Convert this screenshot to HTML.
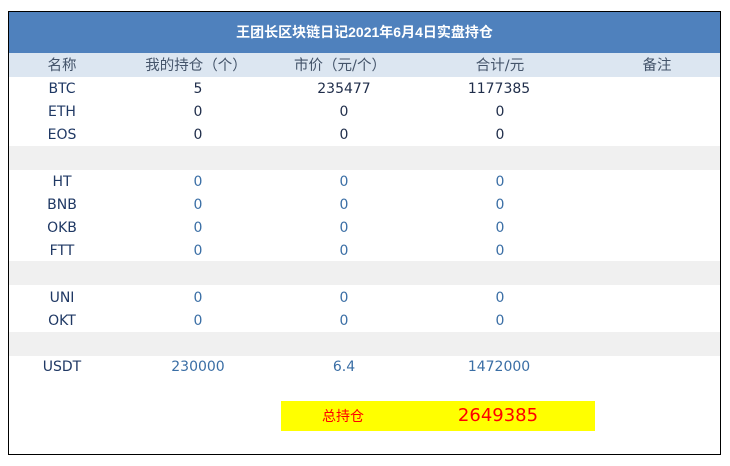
<!DOCTYPE html>
<html><head><meta charset="utf-8"><style>
body{margin:0;width:730px;height:466px;background:#fff;position:relative;overflow:hidden;font-family:"DejaVu Sans","Noto Sans CJK SC",sans-serif;}
.box{position:absolute;left:8px;top:11px;width:711px;height:442px;border:1px solid #000;}
.title{position:absolute;left:9px;top:12px;width:711px;height:41px;background:#4f81bd;color:#fff;font-weight:bold;font-size:14px;text-align:center;line-height:41px;font-family:"Liberation Sans","Noto Sans CJK SC",sans-serif;}
.hdr{position:absolute;left:9px;top:53px;width:711px;height:24px;background:#dce6f1;}
.gray{position:absolute;left:9px;width:711px;height:24px;background:#f0f0f0;}
.t{position:absolute;font-size:14px;transform:translate(-50%,1px);white-space:nowrap;line-height:16px;}
.h{color:#44546a;font-size:14.5px;}
.d{color:#1f2d4a;}
.b{color:#3a6ea5;}
.n{color:#1f3864;}
.y{position:absolute;left:281px;top:401px;width:314px;height:30px;background:#ffff00;}
</style></head><body>
<div class="box"></div>
<div class="title">王团长区块链日记2021年6月4日实盘持仓</div>
<div class="hdr"></div>
<div class="gray" style="top:146px"></div>
<div class="gray" style="top:261px"></div>
<div class="gray" style="top:332px"></div>
<div class="t h" style="left:62px;top:57px">名称</div>
<div class="t h" style="left:196px;top:57px">我的持仓（个）</div>
<div class="t h" style="left:340px;top:57px">市价（元/个）</div>
<div class="t h" style="left:500px;top:57px">合计/元</div>
<div class="t h" style="left:657px;top:57px">备注</div>

<div class="t n" style="left:62px;top:80px">BTC</div><div class="t d" style="left:198px;top:80px">5</div><div class="t d" style="left:344px;top:80px">235477</div><div class="t d" style="left:499px;top:80px">1177385</div>
<div class="t n" style="left:62px;top:103px">ETH</div><div class="t d" style="left:198px;top:103px">0</div><div class="t d" style="left:344px;top:103px">0</div><div class="t d" style="left:500px;top:103px">0</div>
<div class="t n" style="left:62px;top:126px">EOS</div><div class="t d" style="left:198px;top:126px">0</div><div class="t d" style="left:344px;top:126px">0</div><div class="t d" style="left:500px;top:126px">0</div>

<div class="t n" style="left:62px;top:173px">HT</div><div class="t b" style="left:198px;top:173px">0</div><div class="t b" style="left:344px;top:173px">0</div><div class="t b" style="left:500px;top:173px">0</div>
<div class="t n" style="left:62px;top:196px">BNB</div><div class="t b" style="left:198px;top:196px">0</div><div class="t b" style="left:344px;top:196px">0</div><div class="t b" style="left:500px;top:196px">0</div>
<div class="t n" style="left:62px;top:219px">OKB</div><div class="t b" style="left:198px;top:219px">0</div><div class="t b" style="left:344px;top:219px">0</div><div class="t b" style="left:500px;top:219px">0</div>
<div class="t n" style="left:62px;top:242px">FTT</div><div class="t b" style="left:198px;top:242px">0</div><div class="t b" style="left:344px;top:242px">0</div><div class="t b" style="left:500px;top:242px">0</div>

<div class="t n" style="left:62px;top:289px">UNI</div><div class="t b" style="left:198px;top:289px">0</div><div class="t b" style="left:344px;top:289px">0</div><div class="t b" style="left:500px;top:289px">0</div>
<div class="t n" style="left:62px;top:312px">OKT</div><div class="t b" style="left:198px;top:312px">0</div><div class="t b" style="left:344px;top:312px">0</div><div class="t b" style="left:500px;top:312px">0</div>

<div class="t n" style="left:62px;top:358px">USDT</div><div class="t b" style="left:198px;top:358px">230000</div><div class="t b" style="left:344px;top:358px">6.4</div><div class="t b" style="left:499px;top:358px">1472000</div>

<div class="y"></div>
<div class="t" style="left:343px;top:408px;color:#ff0000;font-size:14px">总持仓</div>
<div class="t" style="left:498px;top:405px;color:#ff0000;font-size:18px;line-height:20px">2649385</div>
</body></html>
